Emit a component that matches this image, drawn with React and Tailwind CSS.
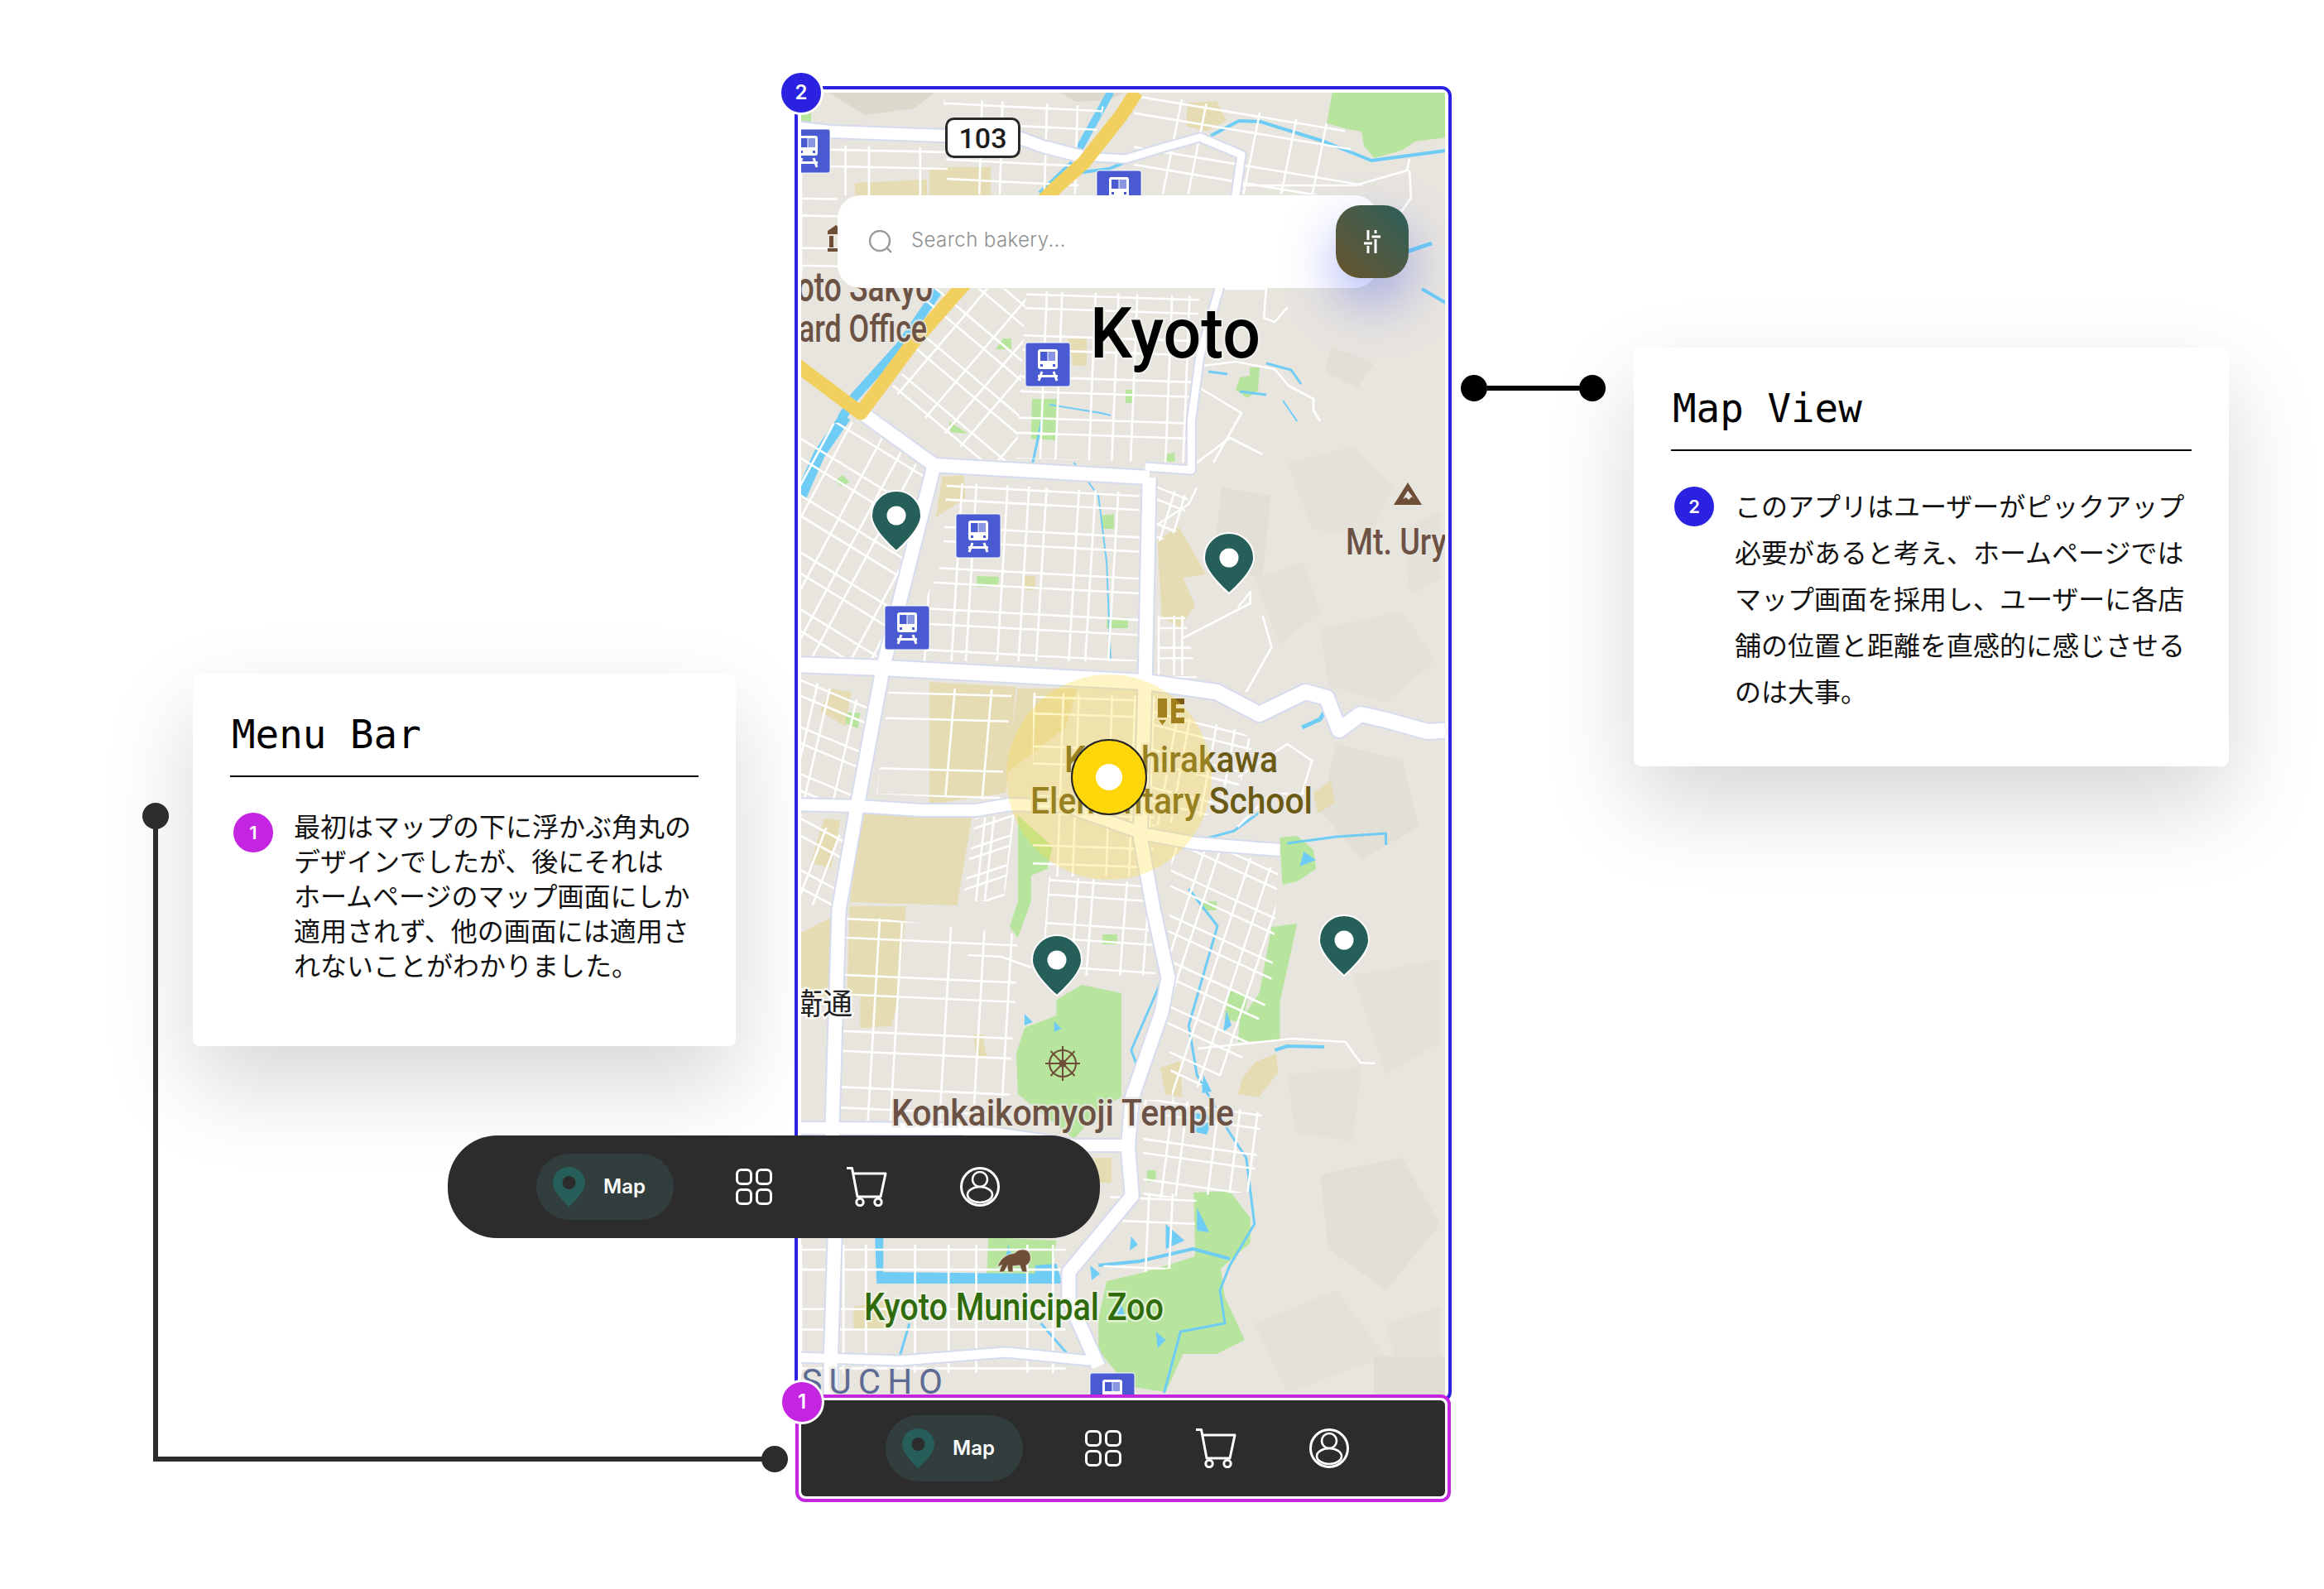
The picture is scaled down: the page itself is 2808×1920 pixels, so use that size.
import React from 'react';

const mono = { fontFamily: '"DejaVu Sans Mono", monospace' };

// the lower half of the map was traced a touch wide, pull those points in
const adj = (s) =>
  s.replace(/(\d+(?:\.\d+)?)([ ,])(\d+(?:\.\d+)?)/g, (_, x, sep, y) =>
    Number(y) > 500 ? `${(960 + (Number(x) - 960) * 0.9923).toFixed(1)}${sep}${y}` : `${x}${sep}${y}`
  );

// street texture: a skewed grid clipped to a district polygon
const makeGrid = ({ o, u, v, n, m }) => {
  let d = '';
  for (let i = 0; i <= n; i++) {
    const j = Math.sin(i * 2.3) * 0.22;
    const x = o[0] + u[0] * (i + j);
    const y = o[1] + u[1] * (i + j);
    d += `M${x} ${y}L${x + v[0] * m} ${y + v[1] * m}`;
  }
  for (let i = 0; i <= m; i++) {
    const j = Math.sin(i * 3.1 + 1) * 0.2;
    const x = o[0] + v[0] * (i + j);
    const y = o[1] + v[1] * (i + j);
    d += `M${x} ${y}L${x + u[0] * n} ${y + u[1] * n}`;
  }
  return d;
};

const districts = [
  { clip: '1145,585 1380,585 1380,800 1085,800 1140,680', o: [1130, 583], u: [28, 1.5], v: [-1.5, 25], n: 10, m: 9 },
  { clip: '968,515 1040,510 1125,575 1068,800 968,800', o: [990, 470], u: [26, 16], v: [-14, 26], n: 9, m: 13 },
  { clip: '1120,350 1240,350 1230,560 1135,555 1060,490 1100,440', o: [1040, 440], u: [25, 21], v: [17, -20], n: 10, m: 8 },
  { clip: '1240,350 1450,350 1440,560 1230,555', o: [1230, 352], u: [30, 1], v: [-1, 25], n: 8, m: 9 },
  { clip: '968,172 1145,172 1145,237 1012,237 1012,350 968,350', o: [968, 176], u: [46, 1], v: [0, 30], n: 4, m: 6 },
  { clip: '968,815 1060,815 1035,970 968,970', o: [960, 815], u: [24, 10], v: [-6, 26], n: 5, m: 7 },
  { clip: '1075,830 1225,835 1210,968 1060,960', o: [1070, 830], u: [72, 2], v: [-4, 46], n: 3, m: 3 },
  { clip: '968,985 1030,985 1012,1095 968,1095', o: [968, 985], u: [26, 14], v: [-10, 26], n: 4, m: 5 },
  { clip: '1180,990 1228,985 1215,1090 1165,1090', o: [1170, 990], u: [18, -6], v: [-2, 18], n: 4, m: 6 },
  { clip: '1270,1060 1395,1060 1400,1180 1260,1180', o: [1268, 1060], u: [30, 2], v: [-2, 26], n: 5, m: 5 },
  { clip: '1420,1020 1550,1030 1540,1200 1500,1290 1420,1330 1412,1200', o: [1430, 1000], u: [26, 12], v: [-8, 24], n: 6, m: 13 },
  { clip: '1015,1105 1230,1130 1240,1240 1225,1372 1015,1360', o: [1012, 1105], u: [44, 2], v: [-2, 34], n: 5, m: 8 },
  { clip: '1385,1330 1540,1330 1530,1440 1385,1450', o: [1385, 1325], u: [28, 4], v: [-3, 24], n: 5, m: 5 },
  { clip: '968,1500 1290,1500 1290,1660 968,1660', o: [968, 1505], u: [44, 0], v: [0, 36], n: 8, m: 5 },
  { clip: '1395,860 1480,860 1520,900 1490,980 1395,1000', o: [1395, 858], u: [24, 6], v: [-4, 22], n: 5, m: 7 },
  { clip: '1250,835 1400,840 1400,1060 1250,1060', o: [1250, 838], u: [30, 1], v: [-1, 30], n: 5, m: 8 },
  { clip: '1400,745 1435,745 1450,820 1400,820', o: [1400, 745], u: [16, 0], v: [0, 18], n: 3, m: 4 },
  { clip: '1140,112 1340,112 1300,236 1145,236', o: [1140, 120], u: [40, 2], v: [-1, 34], n: 5, m: 4 },
  { clip: '1370,112 1610,112 1650,236 1370,236', o: [1372, 112], u: [48, 8], v: [-6, 30], n: 6, m: 5 },
  { clip: '1396,585 1440,600 1430,640 1396,660', o: [1396, 585], u: [20, 8], v: [-6, 20], n: 3, m: 4 },
  { clip: '1345,1440 1450,1440 1445,1530 1335,1545', o: [1335, 1440], u: [46, 2], v: [-2, 42], n: 3, m: 3 },
];

const sand = [
  '1123,203 1197,203 1197,240 1123,240',
  '1033,222 1120,218 1120,240 1033,240',
  '1435,125 1470,123 1482,147 1457,160 1433,153',
  '1290,410 1313,410 1313,443 1297,443',
  '1140,577 1166,575 1168,603 1132,626',
  '1240,697 1253,697 1253,714 1240,714',
  '1124,825 1230,831 1217,959 1124,973',
  '1232,833 1304,833 1290,880 1217,936',
  '1042,982 1176,988 1158,1095 1027,1091',
  '1027,1096 1096,1096 1086,1207 1078,1241 1040,1243 1040,1205 1024,1205',
  '968,1128 1006,1109 1004,1205 968,1205',
  '1004,833 1029,837 1022,879 991,860',
  '996,990 1016,992 1004,1051 980,1043',
  '1402,653 1428,638 1448,672 1461,695 1433,699 1448,733 1428,760 1407,745',
  '1592,959 1613,944 1618,971 1597,984',
  '1405,1291 1430,1283 1432,1327 1412,1323',
  '1520,1285 1546,1274 1549,1297 1525,1327 1500,1323 1505,1304',
  '1178,1251 1189,1251 1194,1277 1181,1277',
  '1325,1400 1346,1400 1346,1430 1330,1430',
  '1032,1580 1073,1572 1071,1608 1032,1607',
  '1451,1488 1474,1488 1477,1519 1490,1522 1461,1536 1446,1522',
].map(adj);

const parks = [
  '1610,112 1747,112 1747,167 1710,172 1693,183 1660,192 1648,177 1645,160 1627,157 1603,150',
  '968,112 980,112 980,150 968,150',
  '1203,423 1212,410 1222,410 1222,423',
  '1247,483 1277,483 1278,533 1248,531',
  '1148,510 1171,525 1150,523',
  '1410,550 1423,548 1423,559 1412,559',
  '1333,624 1349,622 1349,640 1334,640',
  '1340,749 1366,747 1366,760 1340,760',
  '1182,697 1209,698 1208,710 1182,710',
  '1009,582 1019,575 1027,584 1017,588',
  '1024,862 1040,862 1037,881 1022,875',
  '1493,472 1498,457 1510,455 1510,445 1522,445 1520,473 1507,482',
  '1360,472 1370,472 1370,488 1360,488',
  '1551,1013 1572,1011 1592,1028 1595,1051 1572,1066 1554,1070',
  '1232,986 1274,1024 1268,1051 1248,1059 1248,1090 1232,1134 1222,1121 1232,1090',
  '1279,1209 1310,1191 1358,1201 1358,1327 1340,1335 1300,1377 1232,1323 1230,1274 1240,1243 1279,1228',
  '1335,1130 1353,1130 1353,1142 1335,1142',
  '1456,1090 1474,1090 1474,1101 1456,1101',
  '1541,1121 1572,1117 1551,1212 1551,1258 1500,1260 1502,1235 1526,1201',
  '1490,1197 1513,1203 1505,1237 1483,1232',
  '1389,1415 1400,1415 1400,1429 1389,1429',
  '1446,1442 1490,1440 1515,1473 1515,1503 1495,1520 1479,1534 1484,1568 1508,1620 1474,1637 1433,1637 1412,1683 1366,1676 1330,1633 1330,1595 1340,1549 1387,1538 1448,1519',
  '1196,1496 1279,1500 1274,1530 1253,1545 1194,1545',
].map(adj);

const hills = [
  '1000,112 1130,112 1105,132 1045,140',
  '1280,112 1360,112 1340,122 1300,124',
  '1560,560 1640,540 1690,590 1660,650 1590,640',
  '1610,420 1660,440 1640,470 1600,450',
  '1520,700 1580,680 1600,740 1550,780',
  '1600,760 1700,740 1740,800 1680,850 1610,830',
  '1620,900 1700,920 1720,1000 1650,1040 1600,980',
  '1640,1180 1746,1160 1746,1260 1680,1300',
  '1560,1300 1650,1290 1640,1380 1570,1370',
  '1600,1420 1700,1400 1746,1480 1680,1560 1610,1510',
  '1520,1600 1620,1560 1680,1640 1560,1684',
  '1680,1600 1746,1580 1746,1684 1700,1684',
  '1480,590 1540,600 1530,700 1470,680',
  '1700,640 1746,620 1746,700 1710,720',
].map(adj);

const ponds = [
  '1220,1505 1228,1525 1216,1528',
  '1320,1530 1332,1540 1322,1548',
  '1370,1495 1378,1505 1368,1512',
  '1412,1480 1435,1500 1412,1510',
  '1356,1570 1362,1590 1352,1592',
  '1400,1610 1412,1620 1402,1630',
  '1450,1460 1465,1490 1450,1488',
  '1445,1345 1470,1350 1462,1372 1444,1368',
  '1595,1040 1575,1048 1580,1030',
  '1486,1222 1492,1240 1482,1248',
  '1458,1300 1468,1320 1456,1322',
  '1240,1226 1250,1236 1240,1240',
  '1276,1235 1285,1244 1276,1248',
].map(adj);

// main roads: white with a pale blue casing
const roads = [
  { d: 'M960 155L1003 160L1140 165L1233 168L1260 178L1307 190', w: 14 },
  { d: 'M1045 502L1130 563L1392 578', w: 16 },
  { d: 'M1392 578L1387 821L1381 1013L1397 1100L1415 1182L1407 1224L1371 1327L1366 1388L1371 1446L1294 1538L1294 1572L1330 1652', w: 16 },
  { d: 'M1130 563L1068 806L1037 971L1014 1100L1006 1358L1009 1496L1004 1645L1004 1690', w: 16 },
  { d: 'M960 804L1068 808L1310 821L1387 825L1474 837L1526 864L1582 837L1608 844L1623 883L1649 864L1680 871L1731 885L1765 883', w: 18 },
  { d: 'M960 973L1037 975L1114 980L1181 980L1222 973L1290 975L1387 1009L1448 1020L1551 1028', w: 14 },
  { d: 'M960 1364L1166 1365L1300 1385L1361 1385', w: 14 },
  { d: 'M960 1641L1089 1645L1217 1635L1320 1645', w: 11 },
  { d: 'M1307 190L1360 193L1403 180L1450 167L1500 188L1493 237L1473 350L1450 430L1447 453L1443 510L1443 569L1387 565', w: 9 },
].map((r) => ({ ...r, d: adj(r.d) }));

const thinStreets = [
  'M1433 772L1515 730L1515 716L1500 735',
  'M1530 745L1541 783L1510 837',
  'M1500 225L1637 225L1700 207L1703 193',
  'M1703 207L1705 240L1693 257',
  'M1453 443L1493 438L1540 447L1557 467L1587 483L1587 497L1600 510',
  'M1470 350L1530 350L1527 385L1540 390L1556 372',
  'M1451 1268L1567 1256L1631 1260L1649 1285L1667 1286',
  'M1171 1155L1212 1157L1248 1170',
  'M1394 640L1440 610L1450 590',
  'M1360 245L1520 260L1500 340',
  'M1450 560L1490 530L1530 550',
  'M1450 470L1500 500L1470 560',
  'M1500 1000L1540 960L1590 960',
  'M1500 940L1560 900L1590 920L1572 980',
].map(adj);

const water = [
  { d: 'M1342 112L1300 188', w: 9 },
  { d: 'M1296 198L1257 235', w: 7 },
  { d: 'M1133 353L1087 420L1033 480L1017 507', w: 11 },
  { d: 'M1022 504L990 550L968 600', w: 14 },
  { d: 'M1300 210L1340 205L1400 180', w: 4 },
  { d: 'M1463 165L1497 147L1523 148L1600 172L1657 195L1747 183', w: 4 },
  { d: 'M1268 490L1330 500L1345 503', w: 2 },
  { d: 'M1262 505L1250 560', w: 3 },
  { d: 'M1300 560L1330 600L1340 680L1345 800', w: 2 },
  { d: 'M1530 440L1560 448L1572 465', w: 3 },
  { d: 'M1460 450L1483 453', w: 3 },
  { d: 'M1498 474L1530 478', w: 3 },
  { d: 'M1550 485L1572 510', w: 2 },
  { d: 'M1700 305L1730 295', w: 5 },
  { d: 'M1718 350L1747 367', w: 4 },
  { d: 'M1500 345L1520 350', w: 3 },
  { d: 'M1530 980L1495 1005L1440 1020', w: 3 },
  { d: 'M1578 880L1600 870L1612 850', w: 5 },
  { d: 'M1560 1020L1620 1012L1680 1008L1680 1022', w: 3 },
  { d: 'M1440 1075L1475 1120L1440 1240L1450 1300L1490 1370L1510 1400L1520 1480L1490 1530L1478 1560L1484 1600L1430 1610L1410 1684', w: 3 },
  { d: 'M1405 1190L1370 1270L1385 1310', w: 3 },
  { d: 'M1545 1270L1560 1265L1605 1266', w: 4 },
  { d: 'M1330 1530L1380 1525L1445 1510L1490 1522', w: 4 },
  { d: 'M1260 1600L1295 1640', w: 3 },
  { d: 'M1100 1600L1085 1650', w: 3 },
].map((s) => ({ ...s, d: adj(s.d) }));

const Pin = ({ x, y }) => (
  <g transform={`translate(${x} ${y})`}>
    <path d="M30 73C30 73 0 48 0 30A30 30 0 0 1 60 30C60 48 30 73 30 73Z" fill="#265f5a" stroke="#fff" strokeWidth="2" />
    <circle cx="30" cy="30" r="11.5" fill="#fff" />
  </g>
);

const Station = ({ x, y }) => (
  <g transform={`translate(${x} ${y})`}>
    <rect width="54" height="53" rx="3" fill="#4a5ad0" stroke="#fff" strokeOpacity="0.6" strokeWidth="1.5" />
    <rect x="15" y="8" width="24" height="24" rx="3" fill="#fff" />
    <rect x="18" y="11" width="8.5" height="11" fill="#4a5ad0" />
    <rect x="27.5" y="11" width="8.5" height="11" fill="#8a96e2" />
    <rect x="18" y="26" width="3" height="3" fill="#4a5ad0" />
    <rect x="33" y="26" width="3" height="3" fill="#4a5ad0" />
    <path d="M20 35L16 46M34 35L38 46M15 40.5H39" stroke="#fff" strokeWidth="3" fill="none" />
  </g>
);

const MapLabel = ({ x, y, size, fill, halo = '#e8e5df', anchor = 'start', length, weight = 500, spacing, family = 'Roboto, sans-serif', children }) => (
  <text
    x={x}
    y={y}
    fontSize={size}
    fontFamily={family}
    fontWeight={weight}
    fill={fill}
    stroke={halo}
    strokeWidth="5"
    strokeOpacity="0.75"
    paintOrder="stroke"
    textAnchor={anchor}
    textLength={length}
    lengthAdjust={length ? 'spacingAndGlyphs' : undefined}
    letterSpacing={spacing}
  >
    {children}
  </text>
);

const MapDrawing = () => (
  <svg viewBox="968 113 778 1575" className="block w-[778px] h-[1575px]">
    <defs>
      {districts.map((g, i) => (
        <clipPath key={i} id={`district-${i}`}>
          <polygon points={adj(g.clip)} />
        </clipPath>
      ))}
    </defs>
    <rect x="968" y="113" width="778" height="1575" fill="#e8e5df" />
    {hills.map((p, i) => (
      <polygon key={i} points={p} fill={i < 2 ? '#dcd9cc' : i % 3 === 0 ? '#e2dfd6' : '#e4e1d9'} />
    ))}
    <rect x="1660" y="1640" width="86" height="48" fill="#e0ddd2" />
    {sand.map((p) => (
      <polygon key={p} points={p} fill="#e5dcb4" />
    ))}
    {parks.map((p) => (
      <polygon key={p} points={p} fill="#b7e59d" />
    ))}
    <polygon points={adj('1058,1496 1068,1496 1068,1538 1253,1540 1253,1530 1279,1528 1286,1552 1060,1552')} fill="#6fcdf5" />
    {ponds.map((p) => (
      <polygon key={p} points={p} fill="#6fcdf5" />
    ))}
    {water.map((s) => (
      <path key={s.d} d={s.d} fill="none" stroke="#6fcdf5" strokeWidth={s.w} strokeLinejoin="round" />
    ))}
    {districts.map((g, i) => (
      <path key={i} d={makeGrid(g)} clipPath={`url(#district-${i})`} fill="none" stroke="#fff" strokeWidth="2.6" />
    ))}
    {thinStreets.map((d) => (
      <path key={d} d={d} fill="none" stroke="#fff" strokeWidth="2.6" strokeLinejoin="round" />
    ))}
    {roads.map((r) => (
      <path key={r.d} d={r.d} fill="none" stroke="#d5dcee" strokeWidth={r.w + 4} strokeLinejoin="round" />
    ))}
    {roads.map((r) => (
      <path key={r.d} d={r.d} fill="none" stroke="#fff" strokeWidth={r.w} strokeLinejoin="round" />
    ))}
    <path d="M1373 112L1355 140L1310 197L1270 233L1160 350L1103 415L1040 500L960 440" fill="none" stroke="#f2d060" strokeWidth="17" strokeLinejoin="round" />

    {/* road shield */}
    <rect x="1143.5" y="144.5" width="88" height="46" rx="9" fill="#fff" stroke="#2a2a2a" strokeWidth="3" />
    <text x="1187.5" y="180" textAnchor="middle" fontSize="34" fontWeight="500" fontFamily="Roboto, sans-serif" fill="#1c1c1c">103</text>

    {/* brown building */}
    <path d="M1000 280L1010 273L1020 280V284H1000ZM1002 286H1007V300H1002ZM1012 286H1020V300H1012ZM1000 301H1020V305H1000Z" fill="#6f4e37" />

    <Station x={1239} y={415} />
    <Station x={1155} y={622} />
    <Station x={1069} y={733} />
    <Station x={949} y={157} />
    <Station x={1325} y={207} />
    <Station x={1317} y={1660} />

    {/* mountain peak */}
    <path d="M1701 584L1718 611H1684Z" fill="#6f4e37" />
    <path d="M1701 594L1695 604L1699 602L1702 605L1706 601L1709 604Z" fill="#e8e5df" />

    {/* temple wheel */}
    <g fill="none" stroke="#6f4e37" strokeWidth="2">
      <circle cx="1284" cy="1286" r="16" />
      <circle cx="1284" cy="1286" r="3.5" fill="#6f4e37" />
      <path d="M1284 1265V1307M1263 1286H1305M1269.500 1271L1298.500 1301M1298.500 1271L1269.500 1301" />
    </g>

    {/* lion */}
    <g transform="translate(-2 0)">
      <path d="M1207 1532C1210 1522 1218 1516 1228 1515C1232 1510 1243 1509 1246 1515C1249 1521 1247 1528 1242 1530L1243 1538H1237L1234 1530L1226 1531L1226 1538H1220L1219 1531L1215 1538H1209L1212 1530Z" fill="#6f4e37" stroke="#fff" strokeOpacity="0.5" strokeWidth="1.5" />
    </g>

    {/* school marker, sits under the location glow */}
    <g transform="translate(-3 0)">
      <path d="M1402 845H1413V868H1402ZM1403 871H1412L1407.500 877ZM1418 845H1434V852H1424V857H1434V862H1424V868H1434V875H1418Z" fill="#7a5a10" />
    </g>

    <MapLabel x={1127} y={365} size={50} length={205} fill="#6b5244" anchor="end">Kyoto Sakyo</MapLabel>
    <MapLabel x={1120} y={414} size={46} length={186} fill="#6b5244" anchor="end">Ward Office</MapLabel>
    <MapLabel x={1317} y={433} size={86} length={206} fill="#000" halo="#f2f0ec">Kyoto</MapLabel>
    <MapLabel x={1626} y={671} size={44} length={143} fill="#6b5244">Mt. Uryo</MapLabel>
    <MapLabel x={1286} y={934} size={44} length={258} fill="#6b5a14">Kitashirakawa</MapLabel>
    <MapLabel x={1245} y={984} size={44} length={341} fill="#6b5a14">Elementary School</MapLabel>
    <MapLabel x={1077} y={1361} size={44} length={414} fill="#6b5244">Konkaikomyoji Temple</MapLabel>
    <MapLabel x={1044} y={1596} size={46} length={362} fill="#2f6b0a" halo="#f2f7ea">Kyoto Municipal Zoo</MapLabel>
    <MapLabel x={1147} y={1685} size={42} anchor="end" spacing="8" weight={400} fill="#5d6a93">ESUCHO</MapLabel>
    <MapLabel x={1030} y={1227} size={36} anchor="end" weight={400} fill="#222" halo="#fff" family='"Noto Sans CJK JP", sans-serif'>衛通</MapLabel>

    {/* current location */}
    <circle cx="1340" cy="940" r="124" fill="#ffdc3a" fillOpacity="0.3" />

    <Pin x={1053} y={594} />
    <Pin x={1455} y={645} />
    <Pin x={1247} y={1131} />
    <Pin x={1594} y={1107} />

    <circle cx="1340" cy="940" r="45" fill="#ffd60a" stroke="#222" strokeWidth="2" />
    <circle cx="1340" cy="940" r="16" fill="#fff" />
  </svg>
);

const SearchBar = () => (
  <div className="absolute left-[48px] top-[128px] w-[653px] h-[112px] bg-white rounded-[28px] flex items-center pl-[38px]">
    <svg viewBox="0 0 28 28" className="w-[28px] h-[28px] shrink-0" fill="none" stroke="#999" strokeWidth="2.4">
      <circle cx="13" cy="13" r="12" />
      <path d="M22 22L27 27" />
    </svg>
    <span className="ml-[23px] mb-[4px] text-[24px] tracking-[0.4px] font-light text-[#8f8f8f] font-['Inter',sans-serif]">Search bakery...</span>
    <div className="absolute left-[602px] top-[12px] w-[88px] h-[88px] rounded-[30px] bg-gradient-to-bl from-[#265f5a] to-[#66542a] shadow-[0_28px_64px_rgba(70,90,230,0.45)] flex items-center justify-center">
      <svg viewBox="0 0 20 28" className="w-[20px] h-[28px]" fill="none" stroke="#fff" strokeWidth="3">
        <path d="M5 0V12M5 19V28M0 16H10M14 0V4M14 11V28M9.500 8H20" />
      </svg>
    </div>
  </div>
);

const GridIcon = () => (
  <svg viewBox="0 0 44 44" className="w-[44px] h-[44px]" fill="none" stroke="#fff" strokeWidth="3">
    <rect x="1.5" y="1.5" width="17" height="17" rx="5" />
    <rect x="25.5" y="1.5" width="17" height="17" rx="5" />
    <rect x="1.5" y="25.5" width="17" height="17" rx="5" />
    <rect x="25.5" y="25.5" width="17" height="17" rx="5" />
  </svg>
);

const CartIcon = () => (
  <svg viewBox="0 0 49 48" className="w-[49px] h-[48px]" fill="none" stroke="#fff" strokeWidth="3">
    <path d="M0 1.5H6.5L13 36H41L47 8H8" strokeLinejoin="round" />
    <circle cx="16" cy="42.5" r="4.2" />
    <circle cx="38" cy="42.5" r="4.2" />
  </svg>
);

const UserIcon = () => (
  <svg viewBox="0 0 48 48" className="w-[48px] h-[48px]" fill="none" stroke="#fff">
    <circle cx="24" cy="24" r="22.5" strokeWidth="3" />
    <circle cx="24" cy="15" r="9" strokeWidth="2.6" />
    <ellipse cx="24" cy="33.5" rx="15" ry="9.5" strokeWidth="2.6" />
  </svg>
);

const MapTab = () => (
  <div className="w-[166px] h-[80px] rounded-[40px] bg-[#323e3d] flex items-center pl-[20px] shrink-0">
    <svg viewBox="0 0 39 48" className="w-[39px] h-[48px]">
      <path d="M19.5 48C19.5 48 0 31 0 19.5A19.5 19.5 0 0 1 39 19.5C39 31 19.5 48 19.5 48Z" fill="#265f5a" />
      <circle cx="19.5" cy="19" r="8" fill="#2c2c2c" />
    </svg>
    <span className="ml-[22px] text-[24px] font-semibold text-white font-['Inter',sans-serif]">Map</span>
  </div>
);

const NavItems = () => (
  <div className="flex items-center">
    <MapTab />
    <div className="ml-[75px]"><GridIcon /></div>
    <div className="ml-[90px]"><CartIcon /></div>
    <div className="ml-[88px]"><UserIcon /></div>
  </div>
);

const Badge = ({ color, children }) => (
  <div className={`w-[48px] h-[48px] rounded-full flex items-center justify-center text-white text-[22px] font-semibold font-['Inter',sans-serif] shrink-0 ${color}`}>
    {children}
  </div>
);

const NoteCard = ({ className, title, badge, badgeColor, lines, lineClass }) => (
  <div className={`absolute bg-white rounded-[8px] shadow-[0_46px_110px_rgba(0,0,0,0.16)] pt-[42px] px-[45px] ${className}`}>
    <h2 className="h-[64px] pl-[2px] text-[47.5px] leading-[64px] text-black" style={mono}>{title}</h2>
    <div className="mt-[17px] h-[2px] bg-black" />
    <div className="flex gap-[25px] pl-[4px] mt-[37px]">
      <div className="mt-[6px]">
        <Badge color={badgeColor}>{badge}</Badge>
      </div>
      <div className={`text-[32px] text-[#111] whitespace-nowrap font-['Noto_Sans_CJK_JP',sans-serif] ${lineClass}`}>
        {lines.map((l) => (
          <div key={l}>{l}</div>
        ))}
      </div>
    </div>
  </div>
);

const Dot = ({ className }) => <div className={`w-[32px] h-[32px] rounded-full ${className}`} />;

export default function App() {
  return (
    <div className="relative w-[2808px] h-[1920px] bg-white overflow-hidden">
      <NoteCard
        className="left-[233px] top-[814px] w-[656px] h-[450px]"
        title="Menu Bar"
        badge="1"
        badgeColor="bg-[#c425e0]"
        lineClass="leading-[42px]"
        lines={[
          '最初はマップの下に浮かぶ角丸の',
          'デザインでしたが、後にそれは',
          'ホームページのマップ画面にしか',
          '適用されず、他の画面には適用さ',
          'れないことがわかりました。',
        ]}
      />
      <NoteCard
        className="left-[1974px] top-[420px] w-[719px] h-[506px]"
        title="Map View"
        badge="2"
        badgeColor="bg-[#2a22e0]"
        lineClass="leading-[56px]"
        lines={[
          'このアプリはユーザーがピックアップ',
          '必要があると考え、ホームページでは',
          'マップ画面を採用し、ユーザーに各店',
          '舗の位置と距離を直感的に感じさせる',
          'のは大事。',
        ]}
      />

      {/* connector: map view */}
      <div className="absolute left-[1765px] top-[453px] flex items-center">
        <Dot className="bg-black" />
        <div className="w-[111px] h-[6px] bg-black" />
        <Dot className="bg-black" />
      </div>

      {/* connector: menu bar */}
      <div className="absolute left-[185px] top-[986px] w-[751px] h-[780px] border-l-[6px] border-b-[6px] border-[#2c2c2c]" />
      <Dot className="absolute left-[172px] top-[970px] bg-[#2c2c2c]" />
      <Dot className="absolute left-[920px] top-[1747px] bg-[#2c2c2c]" />

      {/* phone */}
      <div className="absolute left-[960px] top-[104px] w-[794px] flex flex-col">
        <div className="relative h-[1590px] border-[4px] border-[#2a22e0] rounded-[12px] bg-white p-[4px] overflow-hidden">
          <MapDrawing />
          <SearchBar />
        </div>
        <div className="relative z-10 -mt-[9px] mx-[1px] h-[130px] border-[4px] border-[#c425e0] rounded-[12px] bg-white p-[3px]">
          <div className="h-full rounded-[6px] bg-[#2c2c2c] flex items-center pl-[102px]">
            <NavItems />
          </div>
        </div>
      </div>

      <div className="absolute z-20 left-[941px] top-[85px] w-[54px] h-[54px] rounded-full border-[3px] border-white bg-[#2a22e0] flex items-center justify-center text-white text-[24px] font-semibold font-['Inter',sans-serif]">2</div>
      <div className="absolute z-20 left-[942px] top-[1667px] w-[54px] h-[54px] rounded-full border-[3px] border-white bg-[#c425e0] flex items-center justify-center text-white text-[24px] font-semibold font-['Inter',sans-serif]">1</div>

      {/* floating menu */}
      <div className="absolute z-20 left-[541px] top-[1372px] w-[788px] h-[124px] rounded-[60px] bg-[#2c2c2c] flex items-center pl-[107px]">
        <NavItems />
      </div>
    </div>
  );
}
